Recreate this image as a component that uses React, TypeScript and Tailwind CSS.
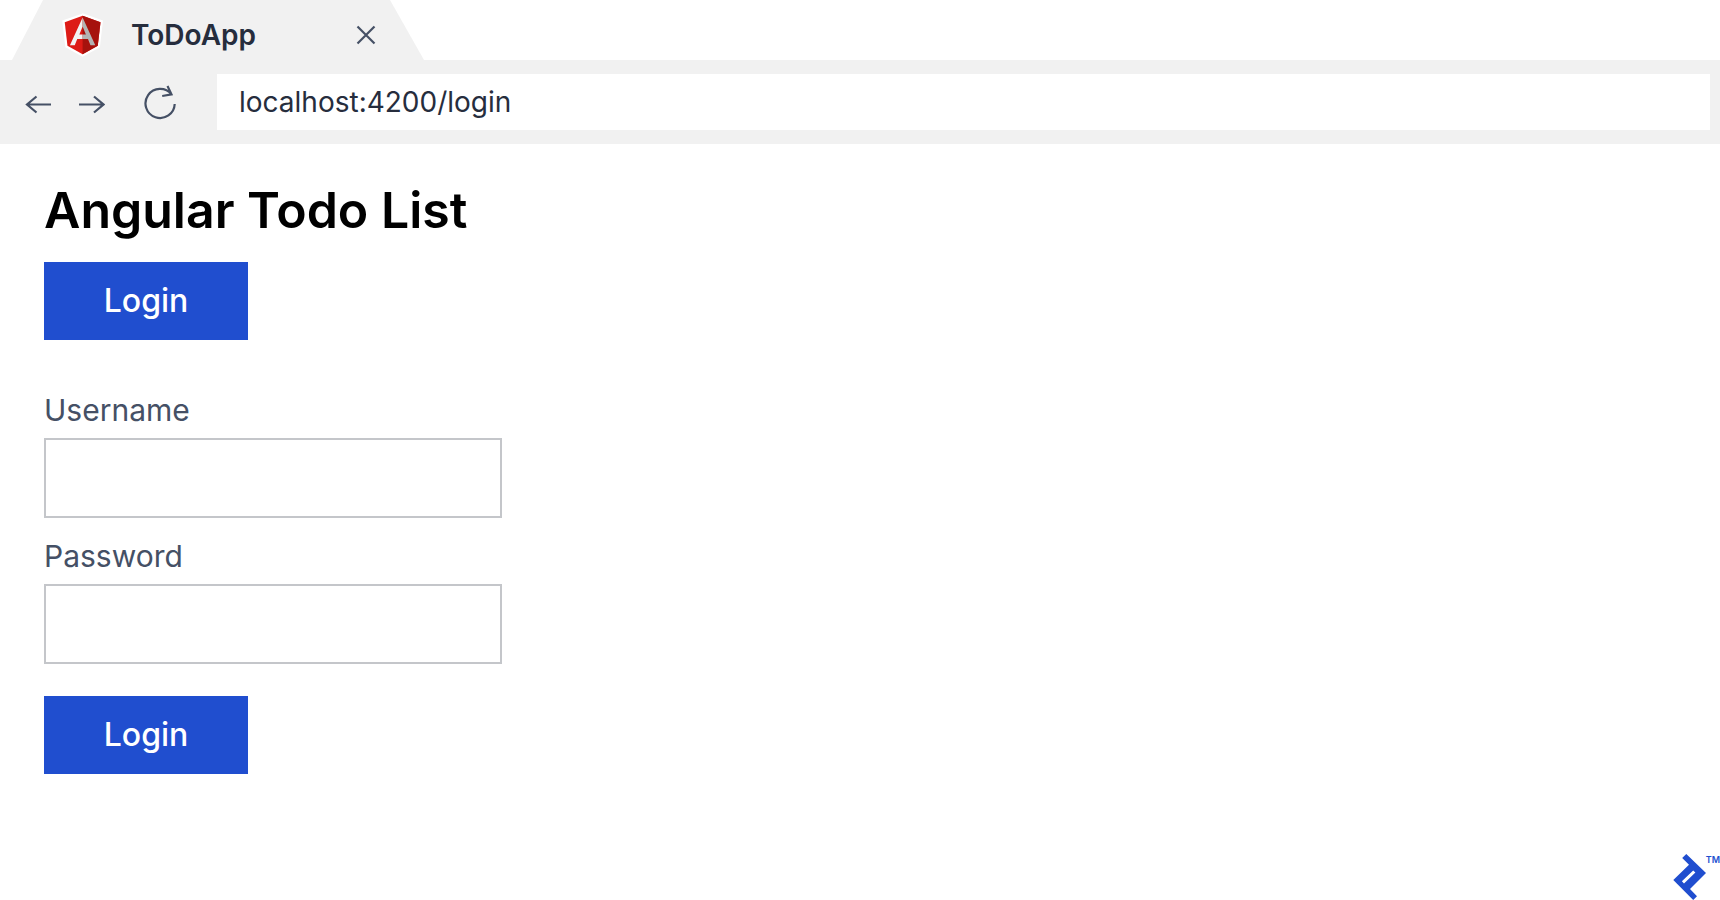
import React from 'react';

interface FieldProps {
    id: string;
    label: string;
    type: string;
    className?: string;
}

function AngularLogo() {
    return (
        <svg viewBox="2 5 250 250" className="h-12 w-12 shrink-0" aria-hidden="true">
            <path d="M125 30 31.9 63.2l14.2 123.1L125 230l78.9-43.7 14.2-123.1z" fill="#fff" stroke="#fff" strokeWidth="24" />
            <path d="M125 30 31.9 63.2l14.2 123.1L125 230l78.9-43.7 14.2-123.1z" fill="#dd1b16" />
            <path d="M125 30v200l78.9-43.7 14.2-123.1z" fill="#a6120d" />
            <path d="M125 39 59 183h25l13-32h28v-24h-17l17-41z" fill="#f2f2f2" />
            <path d="M125 39v47l17 41h-17v24h28l13 32h25z" fill="#b3b3b3" />
        </svg>
    );
}

function ToptalLogo() {
    return (
        <svg viewBox="0 0 33 46" className="h-[46px] w-[33px]" fill="#204ecf" aria-hidden="true">
            <path
                fillRule="evenodd"
                d="M13.3 0 33 18.9 17 35l7 7.3-3.8 3.7L.3 26 16 10.7 9.2 4zM20.2 16.5 8.9 27.2l2.1 2.2 11.4-10.8z"
            />
        </svg>
    );
}

function Field({ id, label, type, className }: FieldProps) {
    return (
        <div className={`flex flex-col ${className ?? ''}`}>
            <label htmlFor={id} className="text-[30px] leading-10 text-[#455065]">
                {label}
            </label>
            <input
                id={id}
                name={id}
                type={type}
                className="mt-2 h-20 w-full border-2 border-[#c4c6ca] bg-white px-4 text-[30px] text-[#262d3d] outline-none focus:border-[#204ecf]"
            />
        </div>
    );
}

const buttonClass =
    'flex h-[78px] w-[204px] items-center justify-center bg-[#204ecf] text-[32px] font-medium text-white hover:bg-[#1a42b0]';

export default function App() {
    return (
        <div className="flex min-h-screen flex-col bg-white font-['Inter','Liberation_Sans',sans-serif]">
            {/* Tab strip */}
            <header>
                <div className="flex h-[60px] px-3">
                    <div className="flex w-[412px] items-center bg-[#f1f1f1] pt-[10px] pr-12 pl-[47px] [clip-path:polygon(31px_0,378px_0,100%_100%,0_100%)]">
                        <AngularLogo />
                        <span className="ml-6 text-[28px] font-semibold text-[#262d3d]">ToDoApp</span>
                        <button type="button" aria-label="Close tab" className="ml-auto">
                            <svg viewBox="0 0 20 20" className="h-5 w-5" fill="none" stroke="#455065" strokeWidth="2.2">
                                <path d="M1.5 1.5l17 17M18.5 1.5l-17 17" />
                            </svg>
                        </button>
                    </div>
                </div>

                {/* Toolbar */}
                <div className="flex h-[84px] items-center bg-[#f1f1f1] pr-[10px] pl-6">
                    <button type="button" aria-label="Back">
                        <svg viewBox="0 0 28 36" className="h-9 w-7" fill="none" stroke="#455065" strokeWidth="2.2">
                            <path d="M27 20.5H3M12.5 12.5 3 20.5l9.5 8" />
                        </svg>
                    </button>
                    <button type="button" aria-label="Forward" className="ml-[25px]">
                        <svg viewBox="0 0 28 36" className="h-9 w-7" fill="none" stroke="#455065" strokeWidth="2.2">
                            <path d="M2 20.5h25M17 12.5l9.5 8-9.5 8" />
                        </svg>
                    </button>
                    <button type="button" aria-label="Reload" className="ml-9">
                        <svg viewBox="0 0 36 36" className="h-9 w-9" fill="none" stroke="#455065" strokeWidth="2.2">
                            <path d="M33.7 20A14.6 14.6 0 1 1 30.5 10.3M26.5 2l4 8.4-9.3 1.6" />
                        </svg>
                    </button>
                    <input
                        type="text"
                        aria-label="Address"
                        defaultValue="localhost:4200/login"
                        className="ml-10 h-14 min-w-0 flex-1 bg-white px-[22px] text-[28px] text-[#262d3d] outline-none"
                    />
                </div>
            </header>

            {/* Page content */}
            <main className="flex-1 px-11 pt-9">
                <h1 className="text-[50px] leading-[60px] font-semibold text-black">Angular Todo List</h1>
                <button type="button" className={`mt-[22px] ${buttonClass}`}>
                    Login
                </button>

                <form className="mt-[50px] max-w-[458px]" onSubmit={(e) => e.preventDefault()}>
                    <Field id="username" label="Username" type="text" />
                    <Field id="password" label="Password" type="password" className="mt-[18px]" />
                    <button type="submit" className={`mt-8 ${buttonClass}`}>
                        Login
                    </button>
                </form>
            </main>

            <footer className="flex items-start justify-end text-[#204ecf]">
                <ToptalLogo />
                <span className="text-[9px] leading-3 font-semibold">TM</span>
            </footer>
        </div>
    );
}
